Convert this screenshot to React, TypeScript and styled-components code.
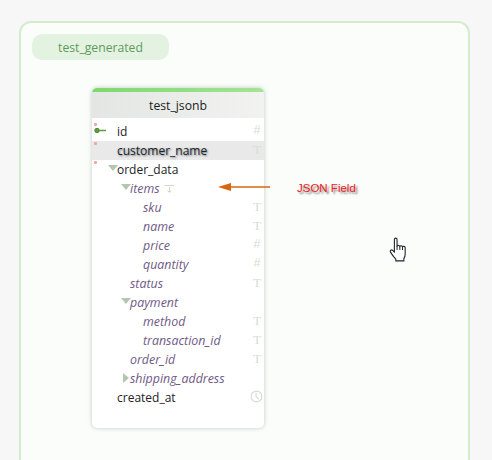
import React from "react";
import styled, { createGlobalStyle } from "styled-components";

const Global = createGlobalStyle`
  html, body { margin: 0; padding: 0; background: #f7f7f7; overflow: hidden; }
  body { font-family: "Open Sans", "Noto Sans", "Liberation Sans", sans-serif; }
`;

const Page = styled.div`
  width: 492px;
  height: 460px;
  padding: 21px 22px 0 19px;
  box-sizing: border-box;
  overflow: hidden;
  position: relative;
`;

const GroupBox = styled.div`
  height: 470px;
  box-sizing: border-box;
  padding: 11px 11px 0 11px;
  background: #fbfdfb;
  border: 2px solid #d3eccd;
  border-radius: 12px;
`;

const GroupLabel = styled.div`
  width: 137px;
  height: 26px;
  display: flex;
  align-items: center;
  justify-content: center;
  background: #e4f3e1;
  border-radius: 10px;
  color: #5f9a5a;
  font-size: 12.2px;
`;

const TableCard = styled.div`
  width: 172px;
  height: 340px;
  margin: 28px 0 0 60px;
  background: #fff;
  border-radius: 5px;
  overflow: hidden;
  box-shadow: 0 0 4px rgba(120, 140, 120, 0.45);
`;

const TopBar = styled.div`
  height: 4px;
  background: linear-gradient(90deg, #7ed96c, #a4e496);
`;

const TableHeader = styled.div`
  height: 26px;
  display: flex;
  align-items: center;
  justify-content: center;
  background: linear-gradient(90deg, #e4e6e3, #f2f3f1);
  color: #222;
  font-size: 12.2px;
`;

const Rows = styled.div`
  padding-top: 4px;
`;

const Row = styled.div<{ $active?: boolean }>`
  height: 19px;
  position: relative;
  display: flex;
  align-items: center;
  background: ${(p) => (p.$active ? "#e9e9e9" : "transparent")};
`;

const Required = styled.span`
  position: absolute;
  left: 2px;
  top: 1px;
  width: 3px;
  height: 3px;
  background: #f3a5a0;
  border-radius: 1px;
`;

const Gutter = styled.span<{ $depth: number }>`
  width: ${(p) => 25 + p.$depth * 13}px;
  flex: none;
  display: flex;
  align-items: center;
  justify-content: flex-end;
`;

const Arrow = styled.span<{ $closed?: boolean }>`
  width: 0;
  height: 0;
  margin-right: ${(p) => (p.$closed ? "1px" : "-1px")};
  margin-bottom: ${(p) => (p.$closed ? "2px" : "4px")};
  ${(p) =>
    p.$closed
      ? `border-top: 5px solid transparent; border-bottom: 5px solid transparent; border-left: 6px solid #b3c6ae;`
      : `border-left: 5px solid transparent; border-right: 5px solid transparent; border-top: 6px solid #b3c6ae;`}
`;

const FieldName = styled.span<{ $nested?: boolean; $shadow?: boolean }>`
  font-size: ${(p) => (p.$nested ? "12.4px" : "12px")};
  white-space: nowrap;
  color: ${(p) => (p.$nested ? "#6f5a86" : "#222")};
  font-style: ${(p) => (p.$nested ? "italic" : "normal")};
  text-shadow: ${(p) => (p.$shadow ? "1px 1px 2px rgba(40, 60, 80, 0.65)" : "none")};
`;

const TypeMark = styled.span<{ $serif?: boolean }>`
  margin: 0 2px 2px auto;
  width: 10px;
  text-align: center;
  font-family: ${(p) => (p.$serif ? '"Liberation Serif", serif' : '"Liberation Sans", sans-serif')};
  font-size: ${(p) => (p.$serif ? "13.5px" : "12.5px")};
  line-height: 15px;
  color: #d5e0d3;
`;

const KeyWrap = styled.span`
  margin: 0 auto 3px 2px;
  line-height: 0;
`;

const ClockWrap = styled.span`
  margin: 0 1px 2px auto;
  line-height: 0;
`;

const ArrayWrap = styled.span`
  margin-left: 4px;
  line-height: 0;
`;

const Annotation = styled.div`
  position: absolute;
  left: 218px;
  top: 180px;
  display: flex;
  align-items: center;
  gap: 26px;
`;

const AnnotationArrow = styled.span`
  line-height: 0;
`;

const AnnotationText = styled.span`
  margin-top: 2px;
  font-family: "Liberation Sans", sans-serif;
  font-size: 11.5px;
  color: #f02020;
  text-shadow: 2px 2px 2px rgba(50, 50, 50, 0.6);
`;

const Cursor = styled.div`
  position: absolute;
  left: 389px;
  top: 237px;
  line-height: 0;
`;

const KeyIcon = () => (
  <svg width="13" height="7" viewBox="0 0 13 7">
    <circle cx="3" cy="3.5" r="2.2" fill="#5c9a3c" stroke="#4b8a30" strokeWidth="1" />
    <path d="M5 3.5h7" stroke="#5c9a3c" strokeWidth="1.4" />
  </svg>
);

const ClockIcon = () => (
  <svg width="13" height="13" viewBox="0 0 14 14" fill="none" stroke="#d3ddd0" strokeWidth="1.2">
    <circle cx="7" cy="7" r="5.8" />
    <path d="M6.5 3v4l3 3" />
  </svg>
);

const ArrayIcon = () => (
  <svg width="11" height="8" viewBox="0 0 11 8" fill="none" stroke="#cfdccc" strokeWidth="1">
    <path d="M0.5 0.5h10" />
    <path d="M5.5 2v5.5M3.5 5.5l2 2 2-2" />
  </svg>
);

const HandIcon = () => (
  <svg width="18" height="25" viewBox="0.5 0 15.5 22.5">
    <path
      d="M5 2.2c0-1.6 2.4-1.6 2.4 0v6.3c.3-1.3 2.4-1.2 2.5.2.3-1.2 2.3-1.1 2.4.3.5-1 2.3-.8 2.4.6v5.6c0 2-.5 3.2-1.2 4.3v2H6.3v-1.6c-1.4-1.4-3.6-4.3-4.8-6.3-.8-1.4.8-2.6 2-1.5l1.5 1.6z"
      fill="#fff"
      stroke="#23232f"
      strokeWidth="1"
      strokeLinejoin="round"
    />
    <path d="M7.4 8.5v3.2M9.9 8.7v3M12.3 9v2.7" stroke="#23232f" strokeWidth="0.9" fill="none" />
  </svg>
);

type Field = {
  name: string;
  depth: number;
  nested?: boolean;
  type?: "T" | "#" | "clock";
  arrow?: "open" | "closed";
  required?: boolean;
  active?: boolean;
  isKey?: boolean;
  isArray?: boolean;
};

const fields: Field[] = [
  { name: "id", depth: 0, type: "#", required: true, isKey: true },
  { name: "customer_name", depth: 0, type: "T", required: true, active: true },
  { name: "order_data", depth: 0, arrow: "open", required: true },
  { name: "items", depth: 1, nested: true, arrow: "open", isArray: true },
  { name: "sku", depth: 2, nested: true, type: "T" },
  { name: "name", depth: 2, nested: true, type: "T" },
  { name: "price", depth: 2, nested: true, type: "#" },
  { name: "quantity", depth: 2, nested: true, type: "#" },
  { name: "status", depth: 1, nested: true, type: "T" },
  { name: "payment", depth: 1, nested: true, arrow: "open" },
  { name: "method", depth: 2, nested: true, type: "T" },
  { name: "transaction_id", depth: 2, nested: true, type: "T" },
  { name: "order_id", depth: 1, nested: true, type: "T" },
  { name: "shipping_address", depth: 1, nested: true, arrow: "closed" },
  { name: "created_at", depth: 0, type: "clock" },
];

export default function App() {
  return (
    <Page>
      <Global />
      <GroupBox>
        <GroupLabel>test_generated</GroupLabel>
        <TableCard>
          <TopBar />
          <TableHeader>test_jsonb</TableHeader>
          <Rows>
            {fields.map((f) => (
              <Row key={f.name} $active={f.active}>
                {f.required && <Required />}
                <Gutter $depth={f.depth}>
                  {f.isKey && (
                    <KeyWrap>
                      <KeyIcon />
                    </KeyWrap>
                  )}
                  {f.arrow && <Arrow $closed={f.arrow === "closed"} />}
                </Gutter>
                <FieldName $nested={f.nested} $shadow={f.active}>
                  {f.name}
                </FieldName>
                {f.isArray && (
                  <ArrayWrap>
                    <ArrayIcon />
                  </ArrayWrap>
                )}
                {f.type === "T" && <TypeMark $serif>T</TypeMark>}
                {f.type === "#" && <TypeMark>#</TypeMark>}
                {f.type === "clock" && (
                  <ClockWrap>
                    <ClockIcon />
                  </ClockWrap>
                )}
              </Row>
            ))}
          </Rows>
        </TableCard>
      </GroupBox>
      <Annotation>
        <AnnotationArrow>
          <svg width="53" height="10" viewBox="0 0 53 10">
            <path d="M12 5h40" stroke="#d9660f" strokeWidth="1.6" />
            <path d="M0 5l13-4v8z" fill="#d9660f" />
          </svg>
        </AnnotationArrow>
        <AnnotationText>JSON Field</AnnotationText>
      </Annotation>
      <Cursor>
        <HandIcon />
      </Cursor>
    </Page>
  );
}
